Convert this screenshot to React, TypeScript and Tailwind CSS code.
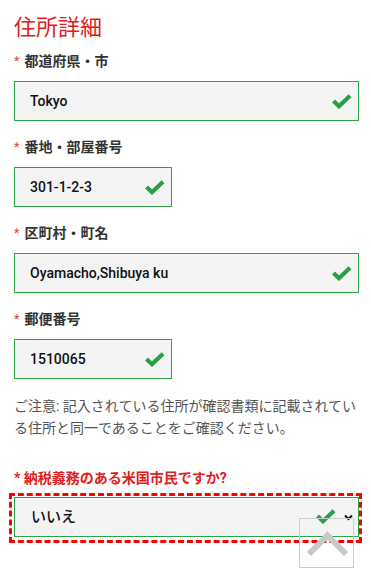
import React from "react"

const font = "font-['Roboto','Noto_Sans_CJK_JP',sans-serif]"

function Check({ className = "" }: { className?: string }) {
    return (
        <svg width="20" height="15" viewBox="0 0 20 15" className={className}>
            <path d="M1.5 7 L7 12.2 L18 1.8" fill="none" stroke="#28a046" strokeWidth="4.2" />
        </svg>
    )
}

function Field({ label, value, wide, first }: { label: string; value: string; wide?: boolean; first?: boolean }) {
    return (
        <div className={first ? "mt-[8px]" : "mt-[16px]"}>
            <div className="flex items-center h-[20px] leading-[20px] mb-[10px]">
                <span className="text-[#e2533f] text-[12px] mr-[5px] font-bold">*</span>
                <span className="text-[14px] font-bold text-[#333]">{label}</span>
            </div>
            <div
                className={`${wide ? "w-[345px]" : "w-[158px]"} h-[40px] bg-[#f4f4f4] border border-[#2aa444] flex items-center justify-between pl-[15px] pr-[6px]`}
            >
                <span className="text-[14px] font-medium text-[#111]">{value}</span>
                <Check />
            </div>
        </div>
    )
}

export default function App() {
    return (
        <div className={`${font} bg-white min-h-[573px] px-[14px] pt-[13px]`}>
            <h1 className="h-[30px] leading-[30px] text-[22px] text-[#e01b22] font-normal">住所詳細</h1>

            <Field label="都道府県・市" value="Tokyo" wide first />
            <Field label="番地・部屋番号" value="301-1-2-3" />
            <Field label="区町村・町名" value="Oyamacho,Shibuya ku" wide />
            <Field label="郵便番号" value="1510065" />

            <p className="mt-[16px] text-[14px] leading-[22px] text-[#555]">
                ご注意: 記入されている住所が確認書類に記載されてい
                <br />
                る住所と同一であることをご確認ください。
            </p>

            <div className="mt-[29px] h-[20px] leading-[20px] text-[14px] font-bold text-[#e0201e]">
                * 納税義務のある米国市民ですか?
            </div>

            <div className="mt-[5px] -ml-[5px] w-[353px] border-[3px] border-dashed border-[#ff0000] pl-[2px] pt-[1px] pb-[3px]">
                <div className="w-[345px] h-[40px] bg-[#f4f4f4] border border-[#2aa444] flex items-center pl-[16px] pr-[5px]">
                    <span className="text-[15px] font-medium text-[#111] flex-1">いいえ</span>
                    <Check className="mr-[8px] -mt-[2px]" />
                    <svg width="9" height="7" viewBox="0 0 9 7" className="mt-[1px]">
                        <path d="M1 1.5 L4.5 5 L8 1.5" fill="none" stroke="#111" strokeWidth="2" />
                    </svg>
                </div>
            </div>

            <button className="fixed bottom-[5px] right-[17px] w-[55px] h-[50px] border border-[#cccccc] bg-transparent">
                <svg width="53" height="48" viewBox="0 0 53 48" className="block">
                    <path d="M9 35 L27.5 16.5 L46 35" fill="none" stroke="#c8c8c8" strokeWidth="6" />
                </svg>
            </button>
        </div>
    )
}
